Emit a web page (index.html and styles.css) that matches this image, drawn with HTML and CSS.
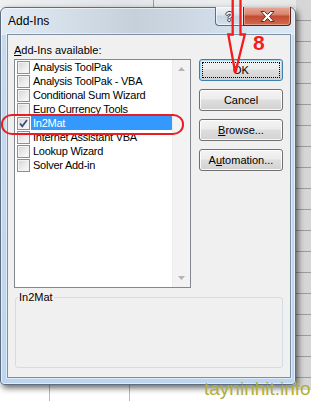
FILE: index.html
```html
<!DOCTYPE html>
<html>
<head>
<meta charset="utf-8">
<title>Add-Ins</title>
<link rel="stylesheet" href="styles.css">
</head>
<body>
<div class="desktop">
  <div class="window">
    <div class="titlebar">
      <span class="title">Add-Ins</span>
      <div class="caption-buttons">
        <div class="cap help"><span class="help-glyph">?</span></div>
        <div class="cap close">
          <svg width="15" height="11" viewBox="0 0 15 11"><polygon points="1,0.5 4.5,0.5 7.5,3.5 10.5,0.5 14,0.5 9.5,5.5 14,10.5 10.5,10.5 7.5,7.5 4.5,10.5 1,10.5 5.5,5.5" fill="#fff" stroke="#3a3a3a" stroke-width="1" stroke-linejoin="round"/></svg>
        </div>
      </div>
    </div>
    <div class="client">
      <div class="main">
        <div class="left">
          <div class="label"><u>A</u>dd-Ins available:</div>
          <div class="listbox">
            <ul class="items">
              <li class="item"><span class="cb"></span><span class="txt">Analysis ToolPak</span></li>
              <li class="item"><span class="cb"></span><span class="txt">Analysis ToolPak - VBA</span></li>
              <li class="item"><span class="cb"></span><span class="txt">Conditional Sum Wizard</span></li>
              <li class="item"><span class="cb"></span><span class="txt">Euro Currency Tools</span></li>
              <li class="item selected"><span class="cb checked"><svg width="11" height="11" viewBox="0 0 11 11"><path d="M2 5.5 L4.3 8.3 L9 2" fill="none" stroke="#3b4a7a" stroke-width="1.7"/></svg></span><span class="txt">In2Mat</span></li>
              <li class="item"><span class="cb"></span><span class="txt">Internet Assistant VBA</span></li>
              <li class="item"><span class="cb"></span><span class="txt">Lookup Wizard</span></li>
              <li class="item"><span class="cb"></span><span class="txt">Solver Add-in</span></li>
            </ul>
            <div class="scrollbar">
              <span class="sb-btn"><svg width="7" height="4" viewBox="0 0 7 4"><polygon points="0,4 3.5,0 7,4" fill="#b4b4b4"/></svg></span>
              <span class="sb-btn"><svg width="7" height="4" viewBox="0 0 7 4"><polygon points="0,0 3.5,4 7,0" fill="#b4b4b4"/></svg></span>
            </div>
          </div>
        </div>
        <div class="buttons">
          <button class="btn default">OK</button>
          <button class="btn">Cancel</button>
          <button class="btn"><u>B</u>rowse...</button>
          <button class="btn">A<u>u</u>tomation...</button>
        </div>
      </div>
      <fieldset class="group"><legend>In2Mat</legend></fieldset>
    </div>
  </div>

  <svg class="annot" width="311" height="401" viewBox="0 0 311 401">
    <path d="M232.7 0 V34.5 H228.3 L235.3 73 L244.8 34.5 H240.5 V0" fill="none" stroke="#f21c1c" stroke-width="2.3" stroke-linejoin="miter"/>
  </svg>
  <div class="mark-ring"></div>
  <div class="mark-num">8</div>
  <div class="watermark">tayninhit.info</div>
</div>
</body>
</html>
```

FILE: styles.css
```css
html, body {
  margin: 0;
  padding: 0;
}

body {
  width: 311px;
  height: 401px;
  overflow: hidden;
  font-family: "Liberation Sans", Arial, sans-serif;
  font-size: 11px;
  color: #000;
}

.desktop {
  position: relative;
  width: 311px;
  height: 401px;
  overflow: hidden;
  background:
    linear-gradient(#b9b9b9, #b9b9b9) 49px 385px / 1px 16px no-repeat,
    linear-gradient(#b9b9b9, #b9b9b9) 129px 385px / 1px 16px no-repeat,
    linear-gradient(#9a9a9a, #9a9a9a) 153px 0 / 1px 8px no-repeat,
    repeating-linear-gradient(to bottom, transparent 0 20px, #9c9c9c 20px 21px) 296px 0 / 15px 390px no-repeat,
    linear-gradient(#d6d6d6, #d6d6d6) 296px 0 / 15px 390px no-repeat,
    linear-gradient(to right, #eef0f2, #e2e5e8 40%, #ecedee 70%, #e6e6e6) 0 0 / 100% 8px no-repeat,
    #ffffff;
}

/* ---------- window ---------- */
.window {
  position: absolute;
  left: 0;
  top: 7px;
  width: 296px;
  height: 378px;
  box-sizing: border-box;
  display: flex;
  flex-direction: column;
  padding: 0 4px 6px 6px;
  border: 1px solid #5e6e80;
  border-radius: 6px 6px 4px 4px;
  background:
    linear-gradient(to right, #e2ebf4 0%, #d3dde8 25%, #c6d0da 45%, #cdd8e4 65%, #d6e4f1 85%, #dbe8f4 100%) 0 0 / 100% 27px no-repeat,
    linear-gradient(to bottom, #c8dbef, #bdd5ee);
  box-shadow: 2px 3px 6px rgba(0, 0, 0, 0.6), inset 0 0 0 1px rgba(255, 255, 255, 0.55);
}

.titlebar {
  height: 26px;
  display: flex;
  align-items: flex-start;
}

.title {
  padding: 6px 0 0 1px;
  line-height: 15px;
  font-size: 12px;
}

.caption-buttons {
  margin-left: auto;
  margin-top: -1px;
  display: flex;
}

.cap {
  height: 19px;
  box-sizing: border-box;
  display: flex;
  align-items: center;
  justify-content: center;
}

.help {
  width: 28px;
  border: 1px solid #5f6f82;
  border-top: none;
  border-right: none;
  border-radius: 0 0 0 4px;
  background: linear-gradient(to bottom, #edf2f7 0%, #dce5ee 45%, #c6d4e2 50%, #d3dfeb 100%);
  box-shadow: inset 0 0 0 1px rgba(255, 255, 255, 0.6);
}

.help-glyph {
  font-weight: bold;
  font-size: 13px;
  line-height: 13px;
  color: #fff;
  text-shadow: 1px 0 0 #3a3a3a, -1px 0 0 #3a3a3a, 0 1px 0 #3a3a3a, 0 -1px 0 #3a3a3a;
}

.close {
  width: 48px;
  border: 1px solid #5a2418;
  border-top: none;
  border-radius: 0 0 4px 0;
  background: linear-gradient(to bottom, #e8a797 0%, #d98670 40%, #c34c33 52%, #cf6c4d 100%);
  box-shadow: inset 0 0 0 1px rgba(255, 210, 200, 0.45);
}

.close svg {
  display: block;
}

/* ---------- client area ---------- */
.client {
  flex: 1;
  display: flex;
  flex-direction: column;
  padding: 8px 7px 9px 6px;
  border: 1px solid #7d8fa3;
  background: #f0f0f0;
  box-shadow: 0 0 0 1px rgba(255, 255, 255, 0.5);
}

.main {
  display: flex;
  gap: 8px;
}

.left {
  width: 177px;
  display: flex;
  flex-direction: column;
}

.label {
  line-height: 15px;
  margin-bottom: 1px;
}

.listbox {
  height: 229px;
  box-sizing: border-box;
  border: 1px solid #828790;
  background: #fff;
  display: flex;
}

.items {
  list-style: none;
  margin: 0;
  padding: 0;
  flex: 1;
}

.item {
  height: 14px;
  display: flex;
  align-items: center;
  padding-left: 2px;
}

.cb {
  width: 13px;
  height: 13px;
  box-sizing: border-box;
  margin-right: 1px;
  border: 1px solid #8e8f8f;
  background: linear-gradient(135deg, #d2d2d2 0%, #ececec 55%, #fbfbfb 100%);
  box-shadow: inset 0 0 0 1px #f3f3f3;
  display: flex;
  align-items: center;
  justify-content: center;
}

.cb svg {
  display: block;
}

.txt {
  flex: 1;
  line-height: 14px;
  padding-left: 2px;
  letter-spacing: -0.25px;
  white-space: nowrap;
}

.item.selected .txt {
  background: #3399ff;
  color: #fff;
}

.scrollbar {
  width: 17px;
  background: #f3f3f3;
  border-left: 1px solid #ececec;
  display: flex;
  flex-direction: column;
  justify-content: space-between;
}

.sb-btn {
  height: 18px;
  display: flex;
  align-items: center;
  justify-content: center;
}

.sb-btn svg {
  display: block;
}

/* ---------- buttons ---------- */
.buttons {
  width: 84px;
  display: flex;
  flex-direction: column;
  gap: 8px;
  padding-top: 16px;
}

.btn {
  height: 22px;
  box-sizing: border-box;
  margin: 0;
  padding: 0;
  font-family: "Liberation Sans", Arial, sans-serif;
  font-size: 11px;
  color: #000;
  border: 1px solid #707070;
  border-radius: 3px;
  background: linear-gradient(to bottom, #f3f3f3 0%, #ececec 45%, #dedede 50%, #d2d2d2 100%);
  box-shadow: inset 0 0 0 1px rgba(255, 255, 255, 0.85);
}

.btn.default {
  border-color: #3c7fb1;
  box-shadow: inset 0 0 0 1px #a9dcf4;
  outline: 1px dotted #000;
  outline-offset: -4px;
}

/* ---------- group box ---------- */
.group {
  margin: 2px 0 0 1px;
  padding: 0;
  height: 78px;
  box-sizing: border-box;
  border: 1px solid #d3dce3;
  border-radius: 3px;
  min-inline-size: 0;
}

.group legend {
  margin-left: 2px;
  padding: 0 1px;
  line-height: 15px;
  font-size: 11px;
}

/* ---------- annotations ---------- */
.annot {
  position: absolute;
  left: 0;
  top: 0;
  pointer-events: none;
}

.mark-ring {
  position: absolute;
  left: 1px;
  top: 114px;
  width: 183px;
  height: 21px;
  box-sizing: border-box;
  border: 2.5px solid #ea1d25;
  border-radius: 11px / 10px;
  pointer-events: none;
}

.mark-num {
  position: absolute;
  left: 253px;
  top: 32px;
  font-family: "Liberation Sans", Arial, sans-serif;
  font-weight: bold;
  font-size: 21px;
  line-height: 21px;
  color: #f21c1c;
}

.watermark {
  position: absolute;
  left: 204px;
  top: 379px;
  font-family: "Liberation Sans", Arial, sans-serif;
  font-size: 19px;
  line-height: 19px;
  color: #b0ae3a;
  white-space: nowrap;
}
```
